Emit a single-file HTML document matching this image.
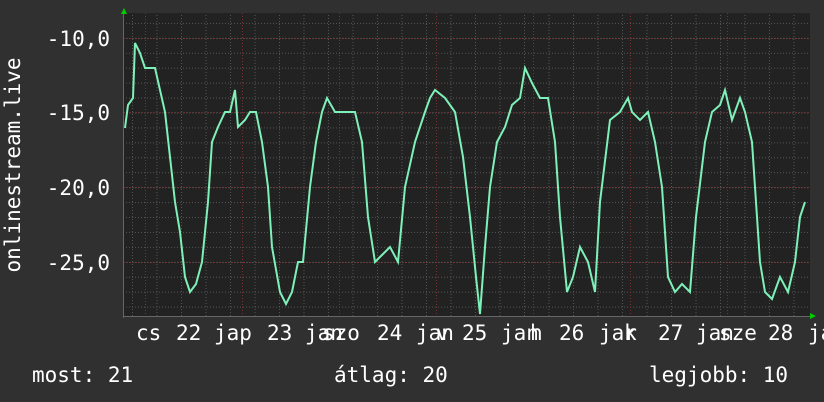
<!DOCTYPE html>
<html><head><meta charset="utf-8"><style>
html,body{margin:0;padding:0;background:#303030;}
body{width:824px;height:402px;overflow:hidden;position:relative;font-family:"DejaVu Sans Mono","Liberation Mono",monospace;color:#fff;}
</style></head><body>
<svg width="824" height="402" viewBox="0 0 824 402" xmlns="http://www.w3.org/2000/svg" style="position:absolute;left:0;top:0">
<defs>
<pattern id="hg" x="0" y="8" width="824" height="14.93" patternUnits="userSpaceOnUse">
<line x1="0" y1="0.5" x2="824" y2="0.5" stroke="#555" stroke-width="1" stroke-dasharray="1,2"/>
</pattern>
<pattern id="vg" x="9.5" y="0" width="24.5" height="402" patternUnits="userSpaceOnUse">
<line x1="0.5" y1="0" x2="0.5" y2="402" stroke="#555" stroke-width="1" stroke-dasharray="1,2"/>
</pattern>
</defs>
<rect x="124" y="13" width="686" height="303" fill="#222"/>
<rect x="124" y="13" width="686" height="303" fill="url(#hg)"/>
<rect x="124" y="13" width="686" height="303" fill="url(#vg)"/>
<g stroke="#7a3030" stroke-width="1" stroke-dasharray="1,2">
<line x1="124" y1="38.5" x2="810" y2="38.5"/>
<line x1="124" y1="112.5" x2="810" y2="112.5"/>
<line x1="124" y1="187.5" x2="810" y2="187.5"/>
<line x1="124" y1="262.5" x2="810" y2="262.5"/>
<line x1="145.5" y1="13" x2="145.5" y2="316"/>
<line x1="242.5" y1="13" x2="242.5" y2="316"/>
<line x1="339.5" y1="13" x2="339.5" y2="316"/>
<line x1="436.5" y1="13" x2="436.5" y2="316"/>
<line x1="533.5" y1="13" x2="533.5" y2="316"/>
<line x1="630.5" y1="13" x2="630.5" y2="316"/>
<line x1="727.5" y1="13" x2="727.5" y2="316"/>
</g>
<line x1="124" y1="316.5" x2="812" y2="316.5" stroke="#666"/>
<line x1="123.5" y1="12" x2="123.5" y2="318" stroke="#666"/>
<polygon points="121,14 124,8 127,14" fill="#0c0"/>
<polygon points="810,313 816,316 810,319" fill="#0c0"/>
<polyline fill="none" stroke="#7ef0b8" stroke-width="2" points="125,128 128,105 133,98 135,43 140,53 145,68 155,68 160,90 165,112 170,157 175,202 180,232 185,277 190,292 196,284 202,262 208,202 212,142 218,127 225,112 230,112 235,90 238,127 245,120 250,112 256,112 262,142 268,187 272,247 280,292 286,304 292,292 298,262 303,262 310,187 316,142 322,112 327,98 335,112 345,112 355,112 362,142 368,217 375,262 382,255 390,247 398,262 405,187 415,142 425,112 430,98 435,90 445,98 455,112 463,157 470,217 476,277 480,314 485,247 490,187 497,142 505,127 512,105 520,98 525,68 532,83 540,98 548,98 555,142 560,217 567,292 573,277 580,247 588,262 595,292 600,202 610,120 620,112 628,98 632,112 640,120 648,112 655,142 662,187 668,277 675,292 682,284 690,292 696,217 705,142 712,112 720,105 725,90 732,120 740,98 745,112 752,142 760,262 765,292 772,299 780,277 788,292 795,262 800,217 805,202"/>
<g fill="#fff" font-family="DejaVu Sans Mono, Liberation Mono, monospace" font-size="21">
<text x="110" y="46" text-anchor="end">-10,0</text>
<text x="110" y="120" text-anchor="end">-15,0</text>
<text x="110" y="195" text-anchor="end">-20,0</text>
<text x="110" y="270" text-anchor="end">-25,0</text>
<text transform="translate(20,165) rotate(-90)" text-anchor="middle">onlinestream.live</text>
<text x="136" y="340">cs</text>
<text x="176" y="340">22</text>
<text x="214" y="340">jap</text>
<text x="267" y="340">23</text>
<text x="305" y="340">jan</text>
<text x="322" y="340">szo</text>
<text x="377" y="340">24</text>
<text x="416" y="340">jan</text>
<text x="436" y="340">v</text>
<text x="462" y="340">25</text>
<text x="501" y="340">jan</text>
<text x="530" y="340">h</text>
<text x="559" y="340">26</text>
<text x="599" y="340">jar</text>
<text x="624" y="340">k</text>
<text x="658" y="340">27</text>
<text x="696" y="340">jan</text>
<text x="719" y="340">sze</text>
<text x="768" y="340">28</text>
<text x="808" y="340">ja</text>
<text x="32" y="382">most: 21</text>
<text x="334" y="382">átlag: 20</text>
<text x="649" y="382">legjobb: 10</text>
</g>
</svg>
</body></html>
